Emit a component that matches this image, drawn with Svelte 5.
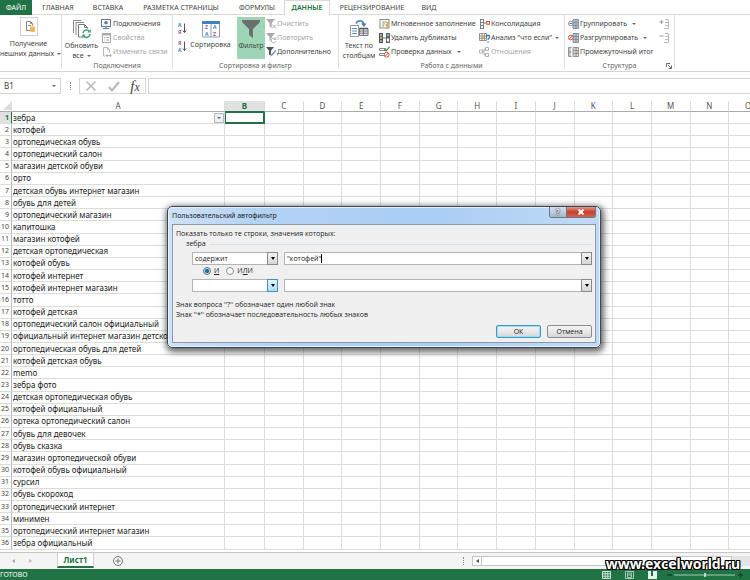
<script>
  const tabs = [
    ['ГЛАВНАЯ', 52], ['ВСТАВКА', 48], ['РАЗМЕТКА СТРАНИЦЫ', 98], ['ФОРМУЛЫ', 54],
    ['ДАННЫЕ', 46], ['РЕЦЕНЗИРОВАНИЕ', 84], ['ВИД', 30]
  ];
  const columns = 'ABCDEFGHIJKLMNO'.split('');
  const rows = [
    'зебра', 'котофей', 'ортопедическая обувь', 'ортопедический салон', 'магазин детской обуви',
    'орто', 'детская обувь интернет магазин', 'обувь для детей', 'ортопедический магазин',
    'капитошка', 'магазин котофей', 'детская ортопедическая', 'котофей обувь', 'котофей интернет',
    'котофей интернет магазин', 'тотто', 'котофей детская', 'ортопедический салон официальный',
    'официальный интернет магазин детской обуви', 'ортопедическая обувь для детей',
    'котофей детская обувь', 'memo', 'зебра фото', 'детская ортопедическая обувь',
    'котофей официальный', 'ортека ортопедический салон', 'обувь для девочек', 'обувь сказка',
    'магазин ортопедической обуви', 'котофей обувь официальный', 'сурсил', 'обувь скороход',
    'ортопедический интернет', 'минимен', 'ортопедический интернет магазин', 'зебра официальный'
  ];
  let join = $state('and');
  let criterion = $state('"котофей"');
</script>

{#snippet icon(name)}
  <svg class="ic" viewBox="0 0 12 12" width="12" height="12" fill="none" aria-hidden="true">
    {#if name === 'links'}
      <rect x=".5" y="1.500" width="9" height="7" stroke="#777" />
      <circle cx="5" cy="4.800" r="1.800" fill="#3f7fbd" />
      <path d="M2 10.500h6M5 8.500v2" stroke="#3f7fbd" />
    {:else if name === 'props'}
      <rect x="1.500" y="1.500" width="8" height="9" stroke="#aaa" />
      <path d="M1.500 2.500h8" stroke="#aaa" stroke-width="2" />
      <path d="M3 5.500h1M3 8h1M5 5.500h3.500M5 8h3.500" stroke="#aaa" />
    {:else if name === 'editlinks'}
      <path d="M2.500 1.500h4l2 2v3M2.500 1.500v8.500h2M6.500 1.500v2h2" stroke="#bbb" />
      <path d="M5 9.500h5M6.500 8l-1.500 1.500 1.500 1.500M9 8l1.500 1.500L9 11" stroke="#bba9c0" />
    {:else if name === 'clear' || name === 'reapply'}
      <path d="M1 1h9L6.800 5v5L4.500 8.500V5z" fill="#aaa" />
      {#if name === 'clear'}
        <path d="M7 6.500l4 4M11 6.500l-4 4" stroke="#fff" stroke-width="2" />
        <path d="M7 6.500l4 4M11 6.500l-4 4" stroke="#aaa" />
      {:else}
        <circle cx="8.500" cy="8.500" r="3" fill="#fff" />
        <path d="M10.500 7.200A2.300 2.300 0 1 0 10.800 9M10.800 5.500v2h-2" stroke="#aaa" />
      {/if}
    {:else if name === 'advanced'}
      <path d="M1 1h8L6 4.800v5L4 8.500V4.800z" fill="#555" />
      <path d="M5 11l1-2.500L10.500 4l1 1L7 9.800z" fill="#3f7fbd" stroke="#fff" stroke-width=".5" />
    {:else if name === 'flash'}
      <rect x="1" y="1.500" width="9" height="8.500" stroke="#8a8a8a" />
      <path d="M3 4h5M3 6h3M3 8h2" stroke="#7aa37f" />
      <path d="M8.500 4L6 8h1.800L6.500 11.500 10.500 7H8.500L10.500 4z" fill="#dda43a" />
    {:else if name === 'dupes'}
      <rect x="0" y="1" width="4" height="10" fill="#555" />
      <path d="M1 3h2M1 9h2" stroke="#79aee0" stroke-width="2" />
      <rect x="1" y="4.500" width="2" height="2.500" fill="#e7a43a" />
      <rect x="7" y="1" width="4" height="10" fill="#666" />
      <path d="M8 3h2" stroke="#79aee0" stroke-width="2" />
      <path d="M8 8h2" stroke="#fff" stroke-width="3" />
      <path d="M4 6h3" stroke="#3f7fbd" />
    {:else if name === 'valid'}
      <path d="M0.500 2.500h6v2h-6zM0.500 7.500h6v2h-6z" stroke="#888" />
      <path d="M5.500 3l1.500 2L10.500.8" stroke="#3c9060" stroke-width="1.300" />
      <circle cx="7.700" cy="8.700" r="2.400" fill="#fff" stroke="#d8553a" />
      <path d="M6 10.400l3.400-3.400" stroke="#d8553a" />
    {:else if name === 'consol'}
      <path d="M1.500 1v9.500M4.500 1v9.500M1 1.500h4M1 4.500h4M1 7.500h4M1 10.500h4" stroke="#777" stroke-width=".9" />
      <path d="M5 5h3" stroke="#3f7fbd" />
      <rect x="7.700" y="3.500" width="2.800" height="2.800" stroke="#d8553a" />
    {:else if name === 'whatif'}
      <path d="M.500 1.500h7v7H.500zM.500 4h7M.500 6.300h7M3 1.500v7M5.500 1.500v7" stroke="#888" stroke-width=".9" />
      <rect x="3" y="4" width="2.500" height="2.500" fill="#e7a43a" />
      <path d="M7.500 5c0-2.500 3.300-2.200 3.100 0-.1 1.300-1.600 1.300-1.600 2.700M9 9.500v1.300" stroke="#2f6fb2" stroke-width="1.300" />
    {:else if name === 'relations'}
      <path d="M.500 4h3v3h-3zM6.500 1.500h3v3h-3zM6.500 7.500h3v3h-3zM3.500 5.500h1.500v-2.500h1.500M5 5.500v3.500h1.500" stroke="#b0b0b0" />
    {:else if name === 'group' || name === 'ungroup' || name === 'subtotal'}
      <rect x="5" y="1.500" width="5.500" height="9" fill={name === 'subtotal' ? '#ddd' : '#a9c4e0'} />
      <path d="M5 1.500h5.500v9H5zM5 4.500h5.500M5 7.500h5.500M8 1.500v9" stroke="#8a8a8a" stroke-width=".9" />
      {#if name === 'subtotal'}
        <path d="M3.500 1.500h-3v9h3M.500 6h3M2 1.500v9" stroke="#888" stroke-width=".9" />
        <path d="M8 6h2.500" stroke="#e39a4a" />
      {:else}
        <circle cx="2.800" cy="5.500" r="2.300" fill="#fff" stroke={name === 'group' ? '#888' : '#d8553a'} />
        <path d={name === 'group' ? 'M1.500 5.500h3' : 'M1.200 7.200l3.200-3.400'} stroke={name === 'group' ? '#3f7fbd' : '#d8553a'} />
      {/if}
    {:else if name === 'show' || name === 'hide'}
      <path d="M6 1.500h3.500v9H5M6 4.500h3.500M6 7.500h3.500" stroke="#bbb" />
      <path d={name === 'show' ? 'M.500 4h4M2.500 2v4' : 'M.500 4h4'} stroke="#999" />
    {/if}
  </svg>
{/snippet}

{#snippet cmd(name, label, off, drop)}
  <button class="cmd" class:off>{@render icon(name)}<span>{label}</span>{#if drop}<i class="drop"></i>{/if}</button>
{/snippet}

{#snippet az(a, b, c1, c2)}
  <svg width="10" height="12" viewBox="0 0 10 12" aria-hidden="true">
    <text x="0" y="5" font-size="5" font-weight="700" fill={c1}>{a}</text>
    <text x="0" y="12" font-size="5" font-weight="700" fill={c2}>{b}</text>
    <path d="M6.500 1.500v9M4.800 8.500l1.700 2 1.700-2" stroke="#555" fill="none" />
  </svg>
{/snippet}

<div class="app">
  <nav class="tabs">
    <button class="file">ФАЙЛ</button>
    {#each tabs as [label, width]}
      <button class:active={label === 'ДАННЫЕ'} style="width: {width}px">{label}</button>
    {/each}
  </nav>

  <div class="ribbon">
    <section class="group g-get">
      <div class="body">
        <button class="big">
          <svg width="18" height="19" viewBox="0 0 18 19" fill="none" aria-hidden="true">
            <rect x=".5" y=".5" width="17" height="18" fill="#fdfdfd" stroke="#d0d0d0" />
            <path d="M6.500 4.500h4l2 2v7h-6zM10.500 4.500v2h2M8 8.500h3" stroke="#888" />
            <path d="M10 9.500h5v4.500a2.500 1 0 0 1-5 0z" fill="#efb659" />
            <ellipse cx="12.500" cy="9.500" rx="2.500" ry="1" fill="#f8d79a" />
          </svg>
          <span>Получение</span><span>внешних данных<i class="drop"></i></span>
        </button>
      </div>
    </section>

    <section class="group g-conn">
      <div class="body">
        <button class="big">
          <svg width="20" height="20" viewBox="0 0 20 20" fill="none" aria-hidden="true">
            <path d="M1.500 14V1.500h8M4 16V3.500h8" stroke="#888" />
            <path d="M6.500 5.500h6l3 3v9.500h-9zM12.500 5.500v3h3" fill="#fff" stroke="#777" />
            <circle cx="14.500" cy="14.500" r="5" fill="#fff" />
            <path d="M11 14a3.600 3.600 0 0 1 6.500-1.500M18 15a3.600 3.600 0 0 1-6.500 1.800" stroke="#4aa37a" stroke-width="1.600" />
            <path d="M18.800 10v3.500h-3.500zM10.200 19v-3.500h3.500z" fill="#4aa37a" />
          </svg>
          <span>Обновить</span><span>все<i class="drop"></i></span>
        </button>
        <div class="stack">
          {@render cmd('links', 'Подключения')}
          {@render cmd('props', 'Свойства', true)}
          {@render cmd('editlinks', 'Изменить связи', true)}
        </div>
      </div>
      <h2>Подключения</h2>
    </section>

    <section class="group g-sort">
      <div class="body">
        <div class="azs">
          <button aria-label="Сортировка от А до Я">{@render az('А', 'Я', '#3f7fbd', '#96569c')}</button>
          <button aria-label="Сортировка от Я до А">{@render az('Я', 'А', '#96569c', '#3f7fbd')}</button>
        </div>
        <button class="big sort">
          <svg width="18" height="17" viewBox="0 0 18 17" aria-hidden="true">
            <path d="M.5.5h17v15.500H.5zM9 1v15" fill="#fff" stroke="#8a9db2" />
            <path d="M0 1.500h18" stroke="#3f7fbd" stroke-width="3" />
            <g font-size="5" font-weight="700">
              <text x="3" y="8" fill="#96569c">Z</text><text x="3" y="15" fill="#3f7fbd">A</text>
              <text x="11" y="8" fill="#3f7fbd">A</text><text x="11" y="15" fill="#96569c">Z</text>
            </g>
          </svg>
          <span>Сортировка</span>
        </button>
        <button class="big filter">
          <svg width="20" height="20" viewBox="0 0 20 20" aria-hidden="true">
            <path d="M1 1h18v2l-7 7v9l-4-3v-6L1 3z" fill="#6b6f6d" />
          </svg>
          <span>Фильтр</span>
        </button>
        <div class="stack">
          {@render cmd('clear', 'Очистить', true)}
          {@render cmd('reapply', 'Повторить', true)}
          {@render cmd('advanced', 'Дополнительно')}
        </div>
      </div>
      <h2>Сортировка и фильтр</h2>
    </section>

    <section class="group g-data">
      <div class="body">
        <button class="big">
          <svg width="20" height="20" viewBox="0 0 20 20" fill="none" aria-hidden="true">
            <path d="M1.500 6.500h8v11h-8z" fill="#fff" stroke="#999" />
            <path d="M3 9.500h5M3 12h5M3 14.500h5" stroke="#5b93cc" />
            <path d="M10.500 9.500h8.500v7h-8.500zM14.500 9.500v7M10.500 12h8.500M10.500 14.200h8.500" fill="#dce8f4" stroke="#777" />
            <path d="M10.500 9.500h8.500" stroke="#555" stroke-width="1.500" />
            <path d="M7 4.500c2-4 7-3.500 8 1" stroke="#3f7fbd" stroke-width="1.600" />
            <path d="M12 4.500h5.500L15 8z" fill="#3f7fbd" />
          </svg>
          <span>Текст по</span><span>столбцам</span>
        </button>
        <div class="stack wide">
          {@render cmd('flash', 'Мгновенное заполнение')}
          {@render cmd('dupes', 'Удалить дубликаты')}
          {@render cmd('valid', 'Проверка данных', false, true)}
        </div>
        <div class="stack">
          {@render cmd('consol', 'Консолидация')}
          {@render cmd('whatif', 'Анализ "что если"', false, true)}
          {@render cmd('relations', 'Отношения', true)}
        </div>
      </div>
      <h2>Работа с данными</h2>
    </section>

    <section class="group g-outline">
      <div class="body">
        <div class="stack outline">
          {@render cmd('group', 'Группировать', false, true)}
          {@render cmd('ungroup', 'Разгруппировать', false, true)}
          {@render cmd('subtotal', 'Промежуточный итог')}
        </div>
        <div class="stack detail">
          <button class="cmd" aria-label="Отобразить детали">{@render icon('show')}</button>
          <button class="cmd" aria-label="Скрыть детали">{@render icon('hide')}</button>
        </div>
      </div>
      <h2>Структура</h2>
      <svg class="launch" width="6" height="6" viewBox="0 0 6 6" fill="none" aria-hidden="true">
        <path d="M.5 4V.5H4M2 2l3 3M5.500 2.500v3h-3" stroke="#666" />
      </svg>
    </section>
  </div>

  <div class="formula">
    <label class="name"><input aria-label="Имя" value="B1" /><i class="drop"></i></label>
    <span class="dots"></span>
    <div class="fx">
      <button aria-label="Отмена ввода"><svg width="12" height="12" viewBox="0 0 12 12"><path d="M1.500 1.500l9 9M10.500 1.500l-9 9" stroke="#b8b8b8" stroke-width="1.500" /></svg></button>
      <button aria-label="Ввод"><svg width="12" height="12" viewBox="0 0 12 12" fill="none"><path d="M1 7l3 3.500L11 2" stroke="#b8b8b8" stroke-width="2" /></svg></button>
      <button class="fn">f<small>x</small></button>
    </div>
    <input class="expr" aria-label="Строка формул" />
  </div>

  <main class="sheet">
    <table>
      <colgroup><col class="c-num" /><col class="c-a" /><col class="c-b" />{#each columns.slice(2) as c (c)}<col />{/each}</colgroup>
      <thead>
        <tr><th class="corner" aria-label="Выделить все"><svg width="8" height="8" viewBox="0 0 8 8"><path d="M8 0v8H0z" fill="#dcdcdc" /></svg></th>
          {#each columns as c (c)}<th class:sel={c === 'B'}>{c}</th>{/each}</tr>
      </thead>
      <tbody>
        {#each rows as text, r}
          <tr>
            <th class:selrow={r === 0}>{r + 1}</th>
            <td class="txt"><div><span>{text}</span>{#if r === 0}<button class="fbtn" aria-label="Фильтр столбца"><i class="drop"></i></button>{/if}</div></td>
            {#each columns.slice(1) as c (c)}<td class:cursor={r === 0 && c === 'B'}></td>{/each}
          </tr>
        {/each}
      </tbody>
    </table>
  </main>

  <div class="sheetbar">
    <span class="arrows"><i class="tri l"></i><i class="tri r"></i></span>
    <button class="stab">Лист1</button>
    <button class="add" aria-label="Новый лист"><svg width="10" height="10" viewBox="0 0 10 10" fill="none"><circle cx="5" cy="5" r="4.500" stroke="#777" /><path d="M2.500 5h5M5 2.500v5" stroke="#777" /></svg></button>
    <span class="dots"></span>
    <div class="scroll"><span class="cap"><i class="tri l"></i></span><span class="thumb"></span></div>
  </div>

  <footer>
    <span>ГОТОВО</span>
    <div class="view">
      <svg width="9" height="8" viewBox="0 0 9 8" fill="none"><path d="M.5.5h8v7h-8zM.5 2.800h8M.5 5.200h8M3.200.5v7M5.800.5v7" stroke="#cfe3d7" /></svg>
      <svg width="9" height="8" viewBox="0 0 9 8" fill="none"><path d="M.5.5h8v7h-8zM2.500 2h4v4.500h-4zM2.500 4h4" stroke="#a6cbb5" /></svg>
      <svg width="9" height="8" viewBox="0 0 9 8" fill="none"><path d="M0 0h3v5h2V0h4v8H0z" fill="#e8f2ec" /></svg>
      <svg class="zoom" width="76" height="8" viewBox="0 0 76 8" fill="none"><path d="M0 4h5M71 4h5M73.500 1.500v5" stroke="#0d4a28" stroke-width="1.500" /><path d="M7 4h61" stroke="#a6cbb5" /><path d="M38 2v4" stroke="#e8f2ec" stroke-width="1.500" /></svg>
    </div>
  </footer>

  <div class="mark">www.excelworld.ru</div>

  <div class="dialog" role="dialog" aria-label="Пользовательский автофильтр">
    <header>
      <h1>Пользовательский автофильтр</h1>
      <div class="win">
        <button class="help" aria-label="Справка">?</button>
        <button class="close" aria-label="Закрыть"><svg width="8" height="6" viewBox="0 0 8 6"><path d="M1.500.5l5 5M6.500.5l-5 5" stroke="#fff" stroke-width="1.800" /></svg></button>
      </div>
    </header>
    <form onsubmit={(e) => e.preventDefault()}>
      <p>Показать только те строки, значения которых:</p>
      <fieldset>
        <legend>зебра</legend>
        <div class="pair">
          <div class="combo"><select aria-label="Условие 1"><option>содержит</option><option>равно</option></select><span class="arrow"></span></div>
          <div class="combo val"><input aria-label="Значение 1" bind:value={criterion} /><span class="caret"></span><span class="arrow"></span></div>
        </div>
        <div class="radios">
          <label><input type="radio" bind:group={join} value="and" /><u>И</u></label>
          <label><input type="radio" bind:group={join} value="or" /><span>И<u>Л</u>И</span></label>
        </div>
        <div class="pair">
          <div class="combo"><select aria-label="Условие 2"><option></option><option>содержит</option></select><span class="arrow hot"></span></div>
          <div class="combo val"><input aria-label="Значение 2" /><span class="arrow"></span></div>
        </div>
      </fieldset>
      <div class="notes"><p>Знак вопроса ''?'' обозначает один любой знак</p><p>Знак ''*'' обозначает последовательность любых знаков</p></div>
      <div class="actions"><button class="ok">ОК</button><button>Отмена</button></div>
    </form>
  </div>
</div>

<style>
  :global(body) { margin: 0; overflow: hidden; }
  .app { position: relative; display: flex; flex-direction: column; height: 100vh; overflow: hidden; background: #fff; color: #444; font: 8px/10px "Noto Sans", "Open Sans", sans-serif; }
  .app *, .app *::before { box-sizing: border-box; }
  button, input, select { font: inherit; color: inherit; border: 0; padding: 0; margin: 0; background: none; min-width: 0; }
  button { white-space: nowrap; }
  svg { display: block; flex: none; }
  h1, h2, p { margin: 0; font-weight: 400; }
  .drop { flex: none; display: inline-block; border: 2px solid transparent; border-top-color: #666; border-bottom: 0; margin-left: 3px; vertical-align: middle; }

  .tabs { display: flex; height: 15px; flex: none; border-bottom: 1px solid #d9d9d9; font-size: 7px; }
  .tabs button { height: 15px; text-align: center; }
  .tabs .file { width: 32px; background: #217346; color: #fff; }
  .tabs .active { background: #fff; border: 1px solid #d9d9d9; border-bottom: 0; color: #217346; font-weight: 600; }

  .ribbon { display: flex; flex: none; height: 57px; border-bottom: 1px solid #d4d4d4; }
  .group { position: relative; display: flex; flex-direction: column; padding-top: 2px; height: 54px; border-right: 1px solid #e1e1e1; }
  .group h2 { font-size: 7px; line-height: 14px; text-align: center; color: #666; }
  .body { display: flex; height: 42px; }
  .g-get { width: 62px; } .g-conn { width: 111px; } .g-sort { width: 166px; } .g-data { width: 226px; } .g-outline { width: 110px; }
  .big { display: flex; flex-direction: column; align-items: center; width: 40px; font-size: 7px; }
  .big svg { margin-bottom: 2px; }
  .g-get .big { width: 57px; }
  .g-get .big svg { margin-bottom: 3px; }
  .g-conn .big, .g-data .big { padding-top: 2px; }
  .g-conn .big { width: 39px; }
  .stack { display: flex; flex-direction: column; }
  .cmd { display: flex; align-items: center; height: 14px; font-size: 7px; text-align: left; }
  .off { color: #a6a6a6; }
  .azs { display: flex; flex-direction: column; gap: 6px; padding: 5px 0 0 5px; }
  .azs button { width: 10px; }
  .sort { width: 45px; padding-top: 4px; margin-right: 4px; }
  .filter { width: 28px; background: #9fd5b7; padding-top: 2px; }
  .g-data .wide { width: 100px; }
  .outline { width: 94px; padding-left: 3px; }
  .outline .drop, .wide .drop { margin-left: 5px; }
  .launch { position: absolute; right: 2px; bottom: 0; }

  .formula { display: flex; flex: none; height: 29px; padding: 6px 0 7px; background: #fff; }
  .name { display: flex; align-items: center; width: 61px; border: 1px solid #d4d4d4; border-left: 0; padding: 0 4px; }
  .name input { flex: 1; }
  .dots { width: 18px; display: flex; align-items: center; justify-content: center; }
  .dots::before { content: ''; height: 8px; border-left: 1px dotted #888; }
  .fx { display: flex; align-items: center; justify-content: space-around; width: 67px; border: 1px solid #d4d4d4; }
  .fn { font: italic 15px/12px "Liberation Serif", serif; color: #444; }
  .fn small { font-size: 12px; }
  .expr { flex: 1; margin-left: 2px; border: 1px solid #d4d4d4; border-right: 0; }

  .sheet { flex: 1; min-height: 0; overflow: hidden; padding-bottom: 2px; background: #fff; }
  table { width: calc(100% + 18px); height: 100%; table-layout: fixed; border-collapse: separate; border-spacing: 0; line-height: 10px; }
  .c-num { width: 12px; } .c-a { width: 213px; } .c-b { width: 40px; }
  th, td { padding: 0; height: 11px; border-right: 1px solid #dcdcdc; border-bottom: 1px solid #dcdcdc; font-weight: 400; white-space: nowrap; }
  thead th { border-bottom-color: #ababab; color: #555; }
  tbody th { font-size: 7px; text-align: right; padding-right: 3px; direction: rtl; border-right-color: #bbb; }
  .corner svg { margin-left: 3px; }
  thead .sel { background: #e1e1e1; color: #217346; font-weight: 700; border-bottom-color: #217346; }
  tbody .selrow { background: #e1e1e1; color: #217346; font-weight: 700; border-right: 1px solid #217346; }
  .txt { padding-left: 1px; color: #222; }
  .txt div { display: flex; align-items: center; justify-content: space-between; height: 10px; overflow: hidden; }
  .fbtn { display: flex; align-items: center; justify-content: center; width: 10px; height: 10px; border: 1px solid #b5b9c0; background: #edf0f4; }
  .fbtn .drop { margin: 0; }
  .cursor { box-shadow: inset 0 0 0 1px #217346; border-color: #217346; }

  .sheetbar { display: flex; flex: none; height: 17px; background: #f4f4f4; border-top: 1px solid #c6c6c6; }
  .arrows { display: flex; align-items: center; gap: 14px; width: 57px; padding-left: 12px; }
  .tri { width: 0; height: 0; border: 2px solid transparent; }
  .l { border-right: 3px solid #aaa; border-left: 0; } .r { border-left: 3px solid #bbb; border-right: 0; }
  .stab { width: 37px; height: 15px; background: #fff; border: 1px solid #d0d0d0; border-top: 0; border-bottom: 2px solid #217346; color: #217346; font-weight: 700; }
  .add { margin-left: 19px; }
  .sheetbar .dots { margin-left: auto; }
  .scroll { display: flex; width: 278px; margin: 3px 0; background: #e4e4e4; }
  .cap { display: flex; align-items: center; justify-content: center; width: 10px; border: 1px solid #c6c6c6; background: #fff; }
  .cap .l { border-right-color: #555; }
  .thumb { width: 250px; background: #fff; border: 1px solid #c6c6c6; border-left: 0; }

  footer { display: flex; flex: none; justify-content: space-between; align-items: center; height: 11px; background: #217346; color: #fff; font-size: 7px; }
  .view { display: flex; align-items: center; gap: 14px; padding-right: 7px; }
  .zoom { margin-left: -4px; }
  .mark { position: absolute; right: 10px; bottom: 7px; color: #fff; font-size: 14px; line-height: 18px; font-weight: 700; text-shadow: -1px -1px #000, 1px -1px #000, -1px 1px #000, 1px 1px #000, 0 -1px #000, 0 1px #000, -1px 0 #000, 1px 0 #000; }

  .dialog { position: absolute; left: 167px; top: 206px; width: 434px; padding: 0 4px 4px; border: 1px solid #3c4653; border-radius: 5px; background: linear-gradient(90deg, #cfe3f8, #b3d3f5 20%, #a9cdf3 60%, #c0daf6); box-shadow: inset 0 0 0 1px #e6f2fd, 1px 2px 6px 2px rgba(0, 0, 0, .6); color: #222; font-size: 7px; }
  .dialog header { display: flex; justify-content: space-between; height: 17px; }
  h1 { font-size: 7px; line-height: 17px; color: #222; }
  .win { display: flex; height: 11px; border: 1px solid #6d7784; border-top: 0; border-radius: 0 0 3px 3px; overflow: hidden; }
  .help { width: 17px; background: linear-gradient(#d5e3f1, #a3b7cc); color: #fff; font-weight: 700; font-size: 8px; text-shadow: 0 0 1px #000, 0 0 2px #223; border-right: 1px solid #6d7784; }
  .close { display: flex; align-items: center; justify-content: center; width: 28px; background: linear-gradient(#e29b8d, #c8402c 50%, #d5634c); }
  form { height: 119px; padding: 4px 3px; border: 1px solid #8d9aa8; background: #f0f0f0; display: flex; flex-direction: column; font-family: "Open Sans", "Noto Sans", sans-serif; }
  fieldset { border: 0; margin: 0; padding: 0 0 0 16px; min-width: 0; }
  legend { display: flex; align-items: center; gap: 3px; width: 100%; padding: 0; margin-left: -6px; line-height: 10px; }
  legend::after { content: ''; flex: 1; height: 1px; background: #d5dfe5; margin-right: -6px; }
  .pair { display: flex; gap: 6px; height: 13px; }
  .pair:first-of-type { margin-top: 3px; }
  .combo { display: flex; width: 86px; border: 1px solid #b4b4b4; background: #fff; }
  .combo.val { width: auto; flex: 1; }
  .combo select { flex: 1; appearance: none; padding-left: 2px; }
  .combo input { flex: 1; padding-left: 2px; }
  .combo input:has(+ .caret) { flex: none; field-sizing: content; }
  .caret { width: 1px; margin: 1px auto 1px 0; background: #000; }
  .arrow { display: flex; align-items: center; justify-content: center; width: 11px; margin: -1px; border: 1px solid #8a8a8a; background: linear-gradient(#f3f3f3, #d6d6d6); flex: none; pointer-events: none; }
  .arrow::before { content: ''; border: 2px solid transparent; border-top: 3px solid #000; border-bottom: 0; }
  .arrow.hot { border-color: #4a8fb8; background: linear-gradient(#e3f4fd, #a9dbf5); }
  .radios { display: flex; gap: 7px; height: 14px; padding: 0 0 2px 11px; align-items: center; }
  .radios label { display: flex; align-items: center; gap: 3px; }
  .radios input { appearance: none; width: 8px; height: 8px; border: 1px solid #909090; border-radius: 50%; background: #f7f7f7; }
  .radios input:checked { background: radial-gradient(circle, #1c6f9e 40%, #d5eaf5 60%); border-color: #58707e; }
  .notes { margin-top: 8px; }
  .actions { display: flex; gap: 6px; justify-content: flex-end; margin-top: 5px; }
  .actions button { width: 45px; height: 13px; border: 1px solid #8d8d8d; border-radius: 2px; background: linear-gradient(#f4f4f4, #e9e9e9 50%, #d6d6d6); }
  .actions .ok { border-color: #3c9bc4; box-shadow: inset 0 0 0 1px #9fdcf5; }
</style>
